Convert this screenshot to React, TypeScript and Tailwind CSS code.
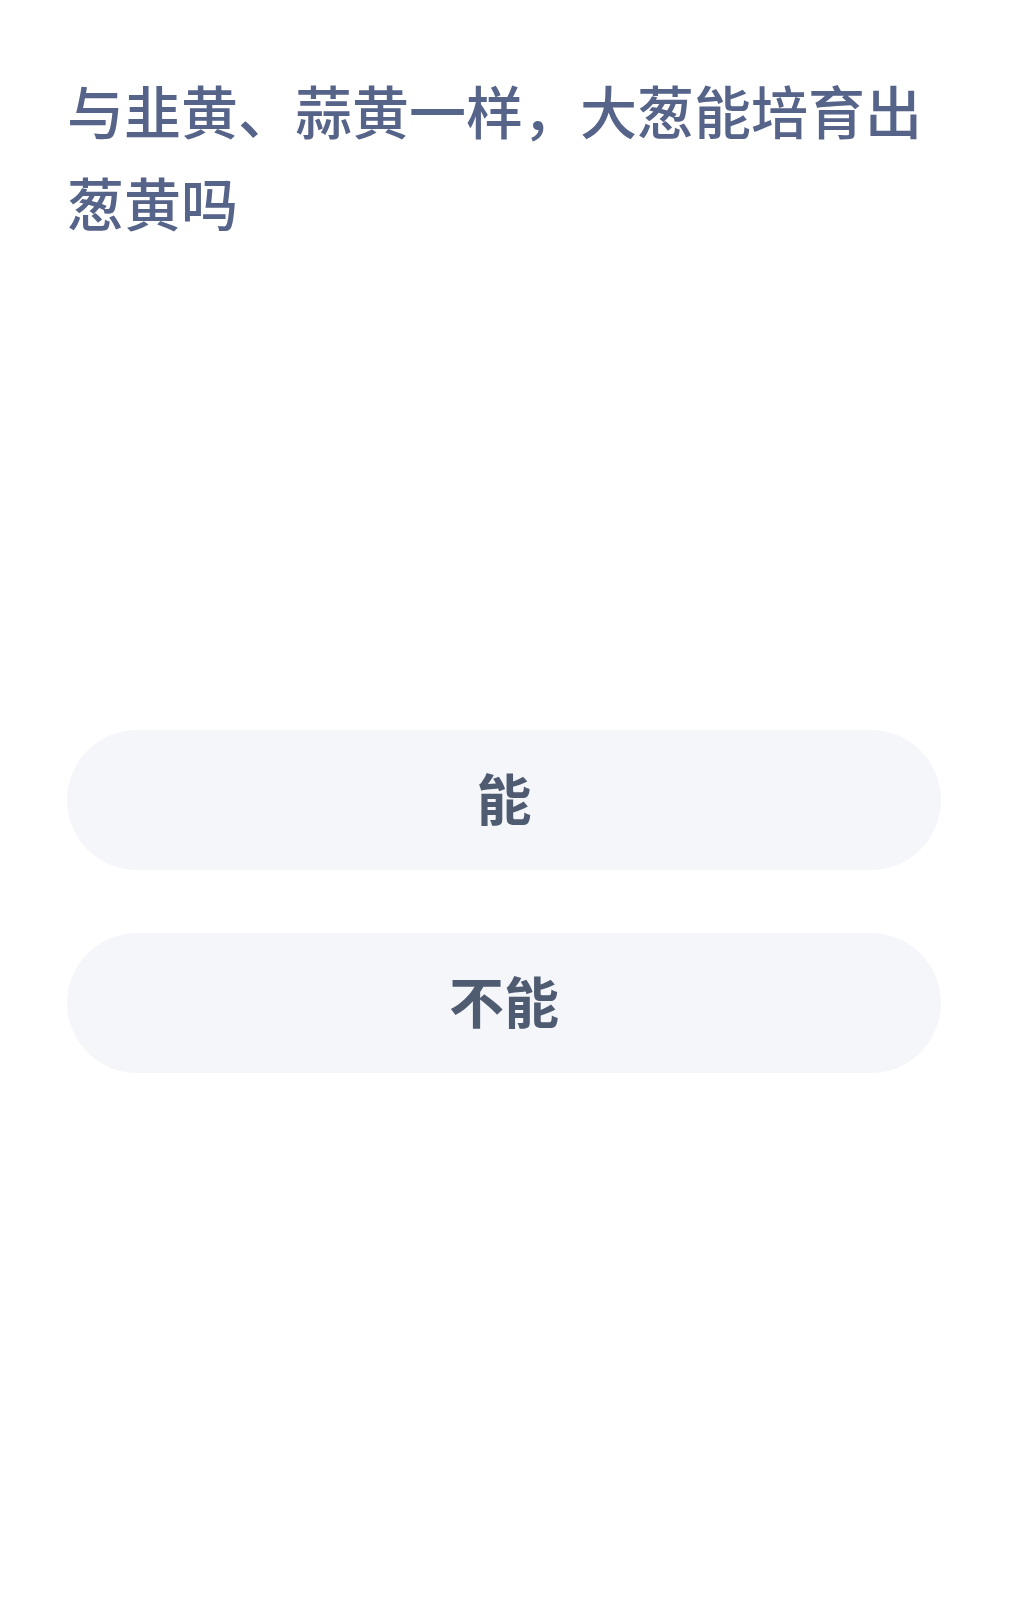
export default function App() {
  const options = ["能", "不能"];

  return (
    <div
      className="min-h-[1597px] bg-white pl-[67px] pr-[76px]"
      style={{ fontFamily: '"Noto Sans CJK SC", "Noto Sans", sans-serif' }}
    >
      <h1 className="pt-[63px] text-[57px] leading-[92px] font-medium text-[#56648a]">
        与韭黄、蒜黄一样，大葱能培育出葱黄吗
      </h1>

      <div className="mt-[483px] flex flex-col gap-[63px]">
        {options.map((opt) => (
          <button
            key={opt}
            className="h-[140px] w-full rounded-full bg-[#f4f6f9] pb-[8px] text-[55px] font-bold text-[#4e5b70]"
          >
            {opt}
          </button>
        ))}
      </div>
    </div>
  );
}
